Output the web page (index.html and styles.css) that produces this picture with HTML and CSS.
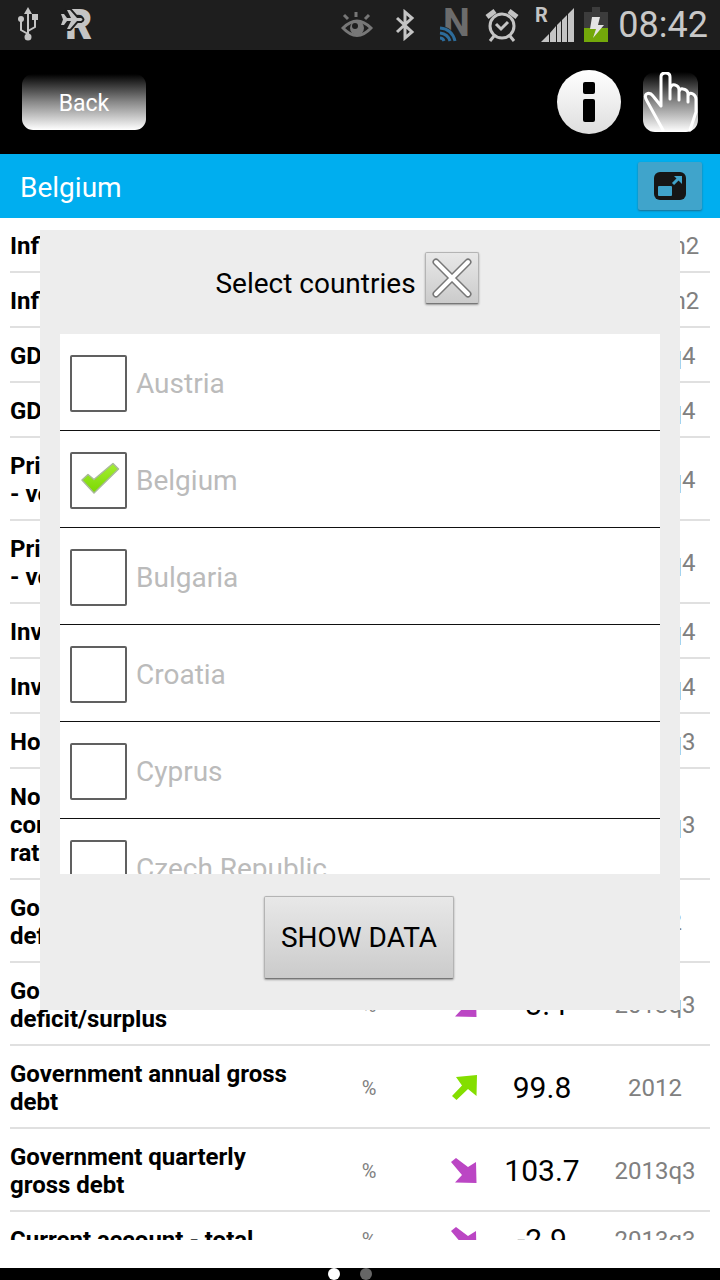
FILE: index.html
```html
<!DOCTYPE html>
<html lang="en">

<head>
    <meta charset="UTF-8">
    <meta name="viewport" content="width=device-width, initial-scale=1.0">
    <title>Belgium</title>

    <link rel="stylesheet" href="styles.css">
</head>

<body>

    <!-- shared shapes -->
    <svg class="defs" width="0" height="0" aria-hidden="true">
        <defs>
            <linearGradient id="tick-fill" x1="0" y1="0" x2="0" y2="1">
                <stop offset="0" stop-color="#a4ee33" />
                <stop offset="1" stop-color="#7ad800" />
            </linearGradient>
        </defs>
        <symbol id="tick" viewBox="0 0 40 32">
            <path d="M2 18L8 12.500L14 17.500L33 1.500L38.500 7L14 31Z" fill="url(#tick-fill)" stroke="#a9b99a" stroke-width="1.500" stroke-linejoin="round" />
        </symbol>
        <symbol id="arrow-down" viewBox="0 0 28 28">
            <path d="M1 5L6 1L18 10L26 5L26.500 26L5 25.500L12 18Z" fill="#bb46c4" />
        </symbol>
        <symbol id="arrow-up" viewBox="0 0 28 28">
            <path d="M2 22L12 11.500L6 3L27 1L26.500 22L18 15L6.500 26Z" fill="#84de00" />
        </symbol>
    </svg>

    <div class="statusbar">
        <div class="status-left">
            <!-- usb -->
            <svg width="24" height="36" viewBox="0 0 24 36" fill="none" stroke="#c4c4c4" stroke-width="2">
                <path d="M12 6V32M12 27L5 23V14M12 24L19 20V12" />
                <path d="M12 0L16 7H8Z" fill="#c4c4c4" stroke="none" />
                <circle cx="5" cy="12" r="3" fill="#c4c4c4" stroke="none" />
                <rect x="16" y="7" width="6" height="6" fill="#c4c4c4" stroke="none" />
                <circle cx="12" cy="30" r="3.500" fill="#c4c4c4" stroke="none" />
            </svg>
            <!-- roaming plane -->
            <svg width="36" height="36" viewBox="0 0 36 36">
                <text x="5" y="32" class="glyph-r">R</text>
                <path d="M1 7L4 7L7 11H11L7 3H10L17 11H21Q24 12.500 21 14H17L10 22H7L11 14H7L4 18H1L3 12.500Z" fill="#c4c4c4" stroke="#1e1e1e" stroke-width="4" stroke-linejoin="round" paint-order="stroke" />
            </svg>
        </div>
        <div class="status-right">
            <!-- smart stay -->
            <svg width="32" height="30" viewBox="0 0 32 30" fill="none" stroke="#777" stroke-width="3">
                <path d="M2 18Q16 4 30 18Q16 33 2 18Z" />
                <circle cx="16" cy="18" r="7" fill="#777" stroke="none" />
                <circle cx="14" cy="16" r="3" fill="#1e1e1e" stroke="none" />
                <path d="M3 5L7 9M15 2V7M28 5L24 9" />
            </svg>
            <!-- bluetooth -->
            <svg class="bluetooth" width="20" height="32" viewBox="0 0 20 32" fill="none" stroke="#c4c4c4" stroke-width="3">
                <path d="M2 9L17 23L10 29V3L17 9L2 23" />
            </svg>
            <!-- nfc -->
            <svg class="nfc" width="32" height="36" viewBox="0 0 32 36">
                <text x="4" y="29" class="glyph-n">N</text>
                <path d="M0 19H4Q16 22 18 34H0Z" fill="#1e1e1e" />
                <g fill="none" stroke="#2d6c9b" stroke-width="3">
                    <path d="M1 21Q13 22 16 34" />
                    <path d="M1 26Q9 27 11 34" />
                    <path d="M1 31Q4 31 5 34" />
                </g>
            </svg>
            <!-- alarm -->
            <svg class="alarm" width="34" height="34" viewBox="0 0 34 34" fill="none" stroke="#c4c4c4" stroke-width="3">
                <circle cx="17" cy="18" r="12" />
                <path d="M11 16L16 21L23 14M9 28L5 33M25 28L29 33" />
                <path d="M2 9L10 3M24 3L32 9" stroke-width="5" />
            </svg>
            <!-- signal -->
            <svg class="signal" width="40" height="38" viewBox="0 0 40 38" fill="#c4c4c4">
                <text x="0" y="16" class="glyph-small">R</text>
                <path d="M6 36L14 28V36ZM15 27L21 20V36H15ZM22 19L26 15V36H22ZM27 14L32 9V36H27ZM33 8L39 2V36H33Z" />
            </svg>
            <!-- battery -->
            <svg class="battery" width="24" height="36" viewBox="0 0 24 36">
                <path d="M8 0H16V5H24V21H0V5H8Z" fill="#3c3c3c" />
                <rect y="21" width="24" height="14" fill="#73a80a" />
                <path d="M8 10H16L14 18H20L9 31L12 22H6Z" fill="#e4e4e4" />
            </svg>
            <span class="clock">08:42</span>
        </div>
    </div>

    <header class="topbar">
        <button type="button" class="back">Back</button>
        <div class="topbar-actions">
            <button type="button" class="info" aria-label="Info">
                <svg width="64" height="64" viewBox="0 0 64 64">
                    <rect x="26" y="12" width="12" height="12" rx="2" />
                    <rect x="26" y="29" width="12" height="23" rx="2" />
                </svg>
            </button>
            <button type="button" class="touch" aria-label="Select">
                <svg width="56" height="60" viewBox="0 0 56 60" fill="none" stroke="#fff" stroke-width="3" stroke-linejoin="round" stroke-linecap="round">
                    <path d="M20 58L4 29Q1 24 3.500 22Q7 20 10 24L18 34V5Q18 1 22.500 1Q27 1 27 5V27V17Q28 12 32 13Q36 14 36 18V28V20Q37 16 40 17Q45 18 45 22V30V24Q46 20 50 22Q53 24 53 27V40L47 58" />
                </svg>
            </button>
        </div>
    </header>

    <div class="titlebar">
        <h1>Belgium</h1>
        <button type="button" class="expand" aria-label="Expand">
            <svg width="32" height="28" viewBox="0 0 32 28">
                <rect width="32" height="28" rx="6" fill="#161616" />
                <rect x="4" y="14" width="14" height="10" rx="1" fill="#40a4cb" />
                <path d="M19 12L25 6" stroke="#40a4cb" stroke-width="3" />
                <path d="M20 4L28 4V12Z" fill="#40a4cb" />
            </svg>
        </button>
    </div>

    <main class="content">
        <div class="indicators">
            <table>
                <colgroup>
                    <col>
                    <col class="col-unit">
                    <col class="col-trend">
                    <col class="col-value">
                    <col class="col-period">
                </colgroup>
                <tbody>
                    <tr><th scope="row">Inflation</th><td></td><td></td><td></td><td>2014m2</td></tr>
                    <tr><th scope="row">Inflation</th><td></td><td></td><td></td><td>2014m2</td></tr>
                    <tr><th scope="row">GDP</th><td></td><td></td><td></td><td>2013q4</td></tr>
                    <tr><th scope="row">GDP</th><td></td><td></td><td></td><td>2013q4</td></tr>
                    <tr><th scope="row">Private<br>- volume</th><td></td><td></td><td></td><td>2013q4</td></tr>
                    <tr><th scope="row">Private<br>- volume</th><td></td><td></td><td></td><td>2013q4</td></tr>
                    <tr><th scope="row">Investment</th><td></td><td></td><td></td><td>2013q4</td></tr>
                    <tr><th scope="row">Investment</th><td></td><td></td><td></td><td>2013q4</td></tr>
                    <tr><th scope="row">House</th><td></td><td></td><td></td><td>2013q3</td></tr>
                    <tr><th scope="row">Non-financial<br>corporations<br>rate</th><td></td><td></td><td></td><td>2013q3</td></tr>
                    <tr><th scope="row">Government<br>deficit</th><td></td><td></td><td></td><td>2012</td></tr>
                    <tr>
                        <th scope="row">Government<br>deficit/surplus</th>
                        <td class="unit">%</td>
                        <td><svg class="trend"><use href="#arrow-down" /></svg></td>
                        <td class="value">-3.4</td>
                        <td>2013q3</td>
                    </tr>
                    <tr>
                        <th scope="row">Government annual gross debt</th>
                        <td class="unit">%</td>
                        <td><svg class="trend"><use href="#arrow-up" /></svg></td>
                        <td class="value">99.8</td>
                        <td>2012</td>
                    </tr>
                    <tr>
                        <th scope="row">Government quarterly gross debt</th>
                        <td class="unit">%</td>
                        <td><svg class="trend"><use href="#arrow-down" /></svg></td>
                        <td class="value">103.7</td>
                        <td>2013q3</td>
                    </tr>
                    <tr>
                        <th scope="row">Current account - total</th>
                        <td class="unit">%</td>
                        <td><svg class="trend"><use href="#arrow-down" /></svg></td>
                        <td class="value">-2.9</td>
                        <td>2013q3</td>
                    </tr>
                </tbody>
            </table>
        </div>

        <form class="dialog" role="dialog" aria-labelledby="dialog-title">
            <div class="dialog-head">
                <h2 id="dialog-title">Select countries</h2>
                <button type="button" class="close" aria-label="Close">
                    <svg width="40" height="40" viewBox="0 0 40 40" fill="none" stroke-linecap="round">
                        <path d="M4 4L36 36M36 4L4 36" stroke="#777" stroke-width="7" />
                        <path d="M4 4L36 36M36 4L4 36" stroke="#fff" stroke-width="4" />
                    </svg>
                </button>
            </div>
            <div class="countries">
                <label><input type="checkbox" name="country" value="AT"><svg class="tick"><use href="#tick" /></svg>Austria</label>
                <label><input type="checkbox" name="country" value="BE" checked><svg class="tick"><use href="#tick" /></svg>Belgium</label>
                <label><input type="checkbox" name="country" value="BG"><svg class="tick"><use href="#tick" /></svg>Bulgaria</label>
                <label><input type="checkbox" name="country" value="HR"><svg class="tick"><use href="#tick" /></svg>Croatia</label>
                <label><input type="checkbox" name="country" value="CY"><svg class="tick"><use href="#tick" /></svg>Cyprus</label>
                <label><input type="checkbox" name="country" value="CZ"><svg class="tick"><use href="#tick" /></svg>Czech Republic</label>
            </div>
            <div class="dialog-foot">
                <button type="button" class="show">SHOW DATA</button>
            </div>
        </form>
    </main>

    <div class="pager">
        <span class="dot active"></span>
        <span class="dot"></span>
    </div>

</body>

</html>
```

FILE: styles.css
```css
* {
    box-sizing: border-box;
}

body {
    margin: 0;
    height: 100vh;
    display: flex;
    flex-direction: column;
    background: #fff;
    color: #000;
    font-family: Roboto, "Liberation Sans", sans-serif;
    font-size: 24px;
}

h1,
h2 {
    margin: 0;
    font-size: 28px;
    font-weight: 400;
}

button {
    padding: 0;
    border: 0;
    font-family: inherit;
    color: inherit;
}

svg {
    display: block;
    flex: none;
}

.defs {
    position: absolute;
}

/* status bar */
.statusbar {
    flex: none;
    height: 50px;
    padding: 0 12px 0 16px;
    display: flex;
    justify-content: space-between;
    align-items: center;
    background: #1e1e1e;
}

.status-left,
.status-right {
    display: flex;
    align-items: center;
}

.status-left {
    gap: 20px;
}

.bluetooth {
    margin-left: 22px;
}

.nfc {
    margin-left: 24px;
}

.alarm {
    margin-left: 14px;
}

.signal {
    margin-left: 16px;
}

.battery {
    margin: 0 10px 0 9px;
}

.glyph-r {
    font-size: 42px;
    font-weight: 900;
    fill: #c4c4c4;
}

.glyph-n {
    font-size: 38px;
    font-weight: 700;
    fill: #6c6c6c;
}

.glyph-small {
    font-size: 20px;
    font-weight: 700;
}

.clock {
    font-size: 36px;
    line-height: 48px;
    color: #c8c8c8;
}

/* header */
.topbar {
    flex: none;
    height: 104px;
    padding: 0 22px;
    display: flex;
    justify-content: space-between;
    align-items: center;
    background: #000;
}

.topbar-actions {
    display: flex;
    align-items: center;
    gap: 22px;
}

.back {
    width: 124px;
    height: 56px;
    padding-top: 2px;
    border-radius: 11px;
    background: linear-gradient(#000, #888 50%, #fff);
    color: #fff;
    font-size: 23px;
}

.info {
    width: 64px;
    height: 64px;
    border-radius: 50%;
    background: linear-gradient(#fff, #dedede);
}

.touch {
    width: 55px;
    height: 60px;
    border-radius: 12px;
    background: linear-gradient(#000, #888 50%, #fff);
}

.titlebar {
    flex: none;
    height: 64px;
    padding: 0 18px 0 20px;
    display: flex;
    justify-content: space-between;
    align-items: center;
    background: #00aeef;
    color: #fff;
}

.titlebar h1 {
    padding-top: 2px;
}

.expand {
    width: 64px;
    height: 48px;
    display: grid;
    place-items: center;
    border-radius: 2px;
    background: #40a4cb;
    box-shadow: 0 1px 2px #1d6f8f;
}

/* indicators */
.content {
    flex: 1;
    min-height: 0;
    position: relative;
    padding-bottom: 28px;
}

.indicators {
    height: 100%;
    padding: 0 10px;
    overflow: hidden;
}

table {
    width: 100%;
    table-layout: fixed;
    border-spacing: 0;
    line-height: 28px;
}

.col-unit {
    width: 154px;
}

.col-trend {
    width: 34px;
}

.col-value {
    width: 120px;
}

.col-period {
    width: 108px;
}

th,
td {
    padding: 14px 0 11px;
    border-bottom: 2px solid #e0e0e0;
}

th {
    text-align: left;
    font-weight: 700;
}

td {
    padding-right: 2px;
    text-align: center;
    color: #808080;
}

.unit {
    padding-right: 4px;
    font-size: 20px;
}

.value {
    padding-right: 0;
    font-size: 30px;
    color: #000;
}

.trend {
    width: 28px;
    height: 28px;
    margin: 0 auto;
}

/* country picker */
.dialog {
    position: absolute;
    top: 12px;
    left: 40px;
    right: 40px;
    bottom: 258px;
    padding: 0 20px;
    display: flex;
    flex-direction: column;
    background: #ededed;
}

.dialog-head {
    flex: none;
    height: 104px;
    padding: 0 26px 30px 0;
    display: flex;
    justify-content: center;
    align-items: flex-end;
    gap: 9px;
    line-height: 40px;
}

.close,
.show {
    border: 1px solid #b4b4b4;
    border-bottom-color: #777;
    border-radius: 2px;
    background: linear-gradient(#e8e8e8, #cbcbcb);
    box-shadow: 0 1px 2px #999;
}

.close {
    width: 54px;
    height: 52px;
    display: grid;
    place-items: center;
}

.countries {
    flex: 1;
    min-height: 0;
    overflow: hidden;
    background: #fff;
}

.countries label {
    position: relative;
    height: 97px;
    padding: 2px 0 0 10px;
    display: flex;
    align-items: center;
    gap: 9px;
    border-bottom: 1px solid #111;
    font-size: 28px;
    color: #bbb;
}

.countries input {
    appearance: none;
    width: 57px;
    height: 57px;
    margin: 0;
    border: 2px solid #606060;
    border-radius: 2px;
}

.tick {
    display: none;
    position: absolute;
    left: 20px;
    top: 31px;
    width: 40px;
    height: 32px;
}

.countries input:checked + .tick {
    display: block;
}

.dialog-foot {
    flex: none;
    height: 136px;
    padding: 22px 2px 0 0;
    display: flex;
    justify-content: center;
    align-items: flex-start;
}

.show {
    width: 190px;
    height: 83px;
    font-size: 28px;
}

/* page dots */
.pager {
    flex: none;
    height: 12px;
    padding-right: 20px;
    display: flex;
    justify-content: center;
    gap: 20px;
    background: #000;
}

.dot {
    width: 12px;
    height: 12px;
    border-radius: 50%;
    background: #666;
}

.dot.active {
    background: #fff;
}
```
